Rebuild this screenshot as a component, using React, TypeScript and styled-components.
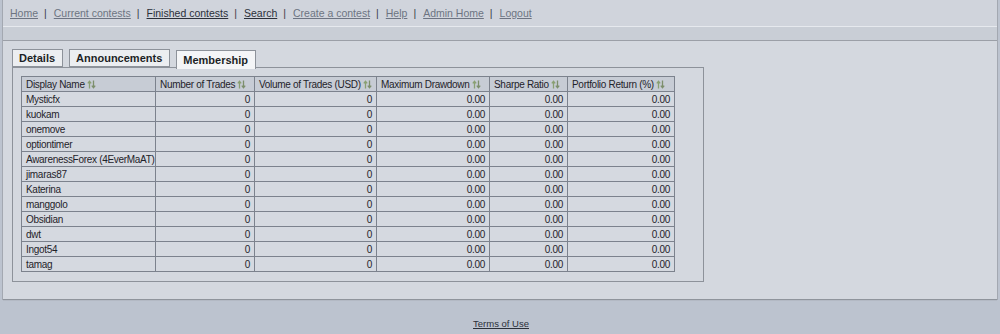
import React from "react";
import styled, { createGlobalStyle } from "styled-components";

const Global = createGlobalStyle`
  html, body { margin: 0; padding: 0; }
  body {
    background: #bcc3cf;
    font-family: "Liberation Sans", Arial, sans-serif;
    color: #222;
  }
`;

const Frame = styled.div`
  margin: 0 2px;
  border-left: 1px solid #a3a8b1;
  border-right: 1px solid #a3a8b1;
  background: #d4d8df;
`;

const Nav = styled.nav`
  height: 26px;
  line-height: 26px;
  padding-left: 7px;
  font-size: 10.5px;
  background: #d0d4dc;
  border-bottom: 1px solid #e6e9ee;
  white-space: nowrap;
`;

const NavLink = styled.a<{ $visited?: boolean }>`
  color: ${(p) => (p.$visited ? "#2b303a" : "#6d7482")};
  text-decoration: underline;
  cursor: pointer;
`;

const Sep = styled.span`
  color: #3a3f48;
  padding: 0 7px 0 6px;
`;

const Band = styled.div`
  height: 13px;
  background: #c9ced6;
  border-bottom: 1px solid #9b9fa7;
`;

const Content = styled.div`
  padding: 9px 10px 17px 9px;
  border-bottom: 1px solid #8f949c;
  box-shadow: 0 1px 0 #b3b9c4;
`;

const Tabs = styled.div`
  display: flex;
  align-items: flex-end;
  gap: 6px;
  height: 17px;
`;

const Tab = styled.div<{ $active?: boolean }>`
  height: ${(p) => (p.$active ? "18px" : "16px")};
  line-height: ${(p) => (p.$active ? "19px" : "17px")};
  padding: 0 7px 0 6px;
  font-size: 11px;
  font-weight: bold;
  color: #1c1f25;
  background: ${(p) => (p.$active ? "#f4f5f7" : "#eceef1")};
  border: 1px solid #8d929a;
  border-bottom: ${(p) => (p.$active ? "none" : "1px solid #8d929a")};
  margin-bottom: ${(p) => (p.$active ? "-2px" : "0")};
  position: relative;
  z-index: ${(p) => (p.$active ? 2 : 1)};
  cursor: pointer;
`;

const Panel = styled.div`
  width: 682px;
  border: 1px solid #8d929a;
  padding: 8px 0 9px 8px;
  background: #d4d8df;
  position: relative;
  z-index: 1;
`;

const Table = styled.table`
  width: 653px;
  border-collapse: collapse;
  font-size: 10px;
  letter-spacing: -0.3px;
  table-layout: fixed;
`;

const Th = styled.th<{ $w: number }>`
  width: ${(p) => p.$w}px;
  height: 14px;
  padding: 0 3px 0 4px;
  text-align: left;
  font-weight: normal;
  color: #1f232a;
  background: #c7ccd5;
  border: 1px solid #7c828d;
  white-space: nowrap;
  overflow: hidden;
`;

const Td = styled.td<{ $num?: boolean }>`
  height: 14px;
  padding: 0 4px;
  text-align: ${(p) => (p.$num ? "right" : "left")};
  color: #1f232a;
  background: #d5d9e0;
  border: 1px solid #7c828d;
  white-space: nowrap;
  overflow: hidden;
`;

const SortIcon = styled.svg`
  margin-left: 2px;
  vertical-align: -1px;
`;

const Footer = styled.div`
  height: 32px;
  display: flex;
  justify-content: center;
  align-items: flex-end;
  padding-bottom: 3px;
  box-sizing: border-box;
  font-size: 9.5px;
`;

const FootLink = styled.a`
  color: #2b303a;
  text-decoration: underline;
  margin-left: 2px;
`;

const Sort = () => (
  <SortIcon width="9" height="9" viewBox="0 0 9 9">
    <path d="M2.5 8.5V1.5M0.8 3.4L2.5 1.2L4.2 3.4" fill="none" stroke="#8aa072" strokeWidth="1.3" />
    <path d="M6.5 0.5V7.5M4.8 5.6L6.5 7.8L8.2 5.6" fill="none" stroke="#7d8f6c" strokeWidth="1.3" />
  </SortIcon>
);

const cols = [
  { name: "Display Name", w: 126 },
  { name: "Number of Trades", w: 91 },
  { name: "Volume of Trades (USD)", w: 114 },
  { name: "Maximum Drawdown", w: 105 },
  { name: "Sharpe Ratio", w: 70 },
  { name: "Portfolio Return (%)", w: 99 },
];

const members = [
  "Mysticfx",
  "kuokam",
  "onemove",
  "optiontimer",
  "AwarenessForex (4EverMaAT)",
  "jimaras87",
  "Katerina",
  "manggolo",
  "Obsidian",
  "dwt",
  "Ingot54",
  "tamag",
];

const links: { label: string; visited?: boolean }[] = [
  { label: "Home" },
  { label: "Current contests" },
  { label: "Finished contests", visited: true },
  { label: "Search", visited: true },
  { label: "Create a contest" },
  { label: "Help" },
  { label: "Admin Home" },
  { label: "Logout" },
];

export default function App() {
  return (
    <>
      <Global />
      <Frame>
        <Nav>
          {links.map((l, i) => (
            <React.Fragment key={l.label}>
              {i > 0 && <Sep>|</Sep>}
              <NavLink $visited={l.visited}>{l.label}</NavLink>
            </React.Fragment>
          ))}
        </Nav>
        <Band />
        <Content>
          <Tabs>
            <Tab>Details</Tab>
            <Tab>Announcements</Tab>
            <Tab $active>Membership</Tab>
          </Tabs>
          <Panel>
            <Table>
              <thead>
                <tr>
                  {cols.map((c) => (
                    <Th key={c.name} $w={c.w}>
                      {c.name}
                      <Sort />
                    </Th>
                  ))}
                </tr>
              </thead>
              <tbody>
                {members.map((m) => (
                  <tr key={m}>
                    <Td>{m}</Td>
                    <Td $num>0</Td>
                    <Td $num>0</Td>
                    <Td $num>0.00</Td>
                    <Td $num>0.00</Td>
                    <Td $num>0.00</Td>
                  </tr>
                ))}
              </tbody>
            </Table>
          </Panel>
        </Content>
      </Frame>
      <Footer>
        <FootLink>Terms of Use</FootLink>
      </Footer>
    </>
  );
}
